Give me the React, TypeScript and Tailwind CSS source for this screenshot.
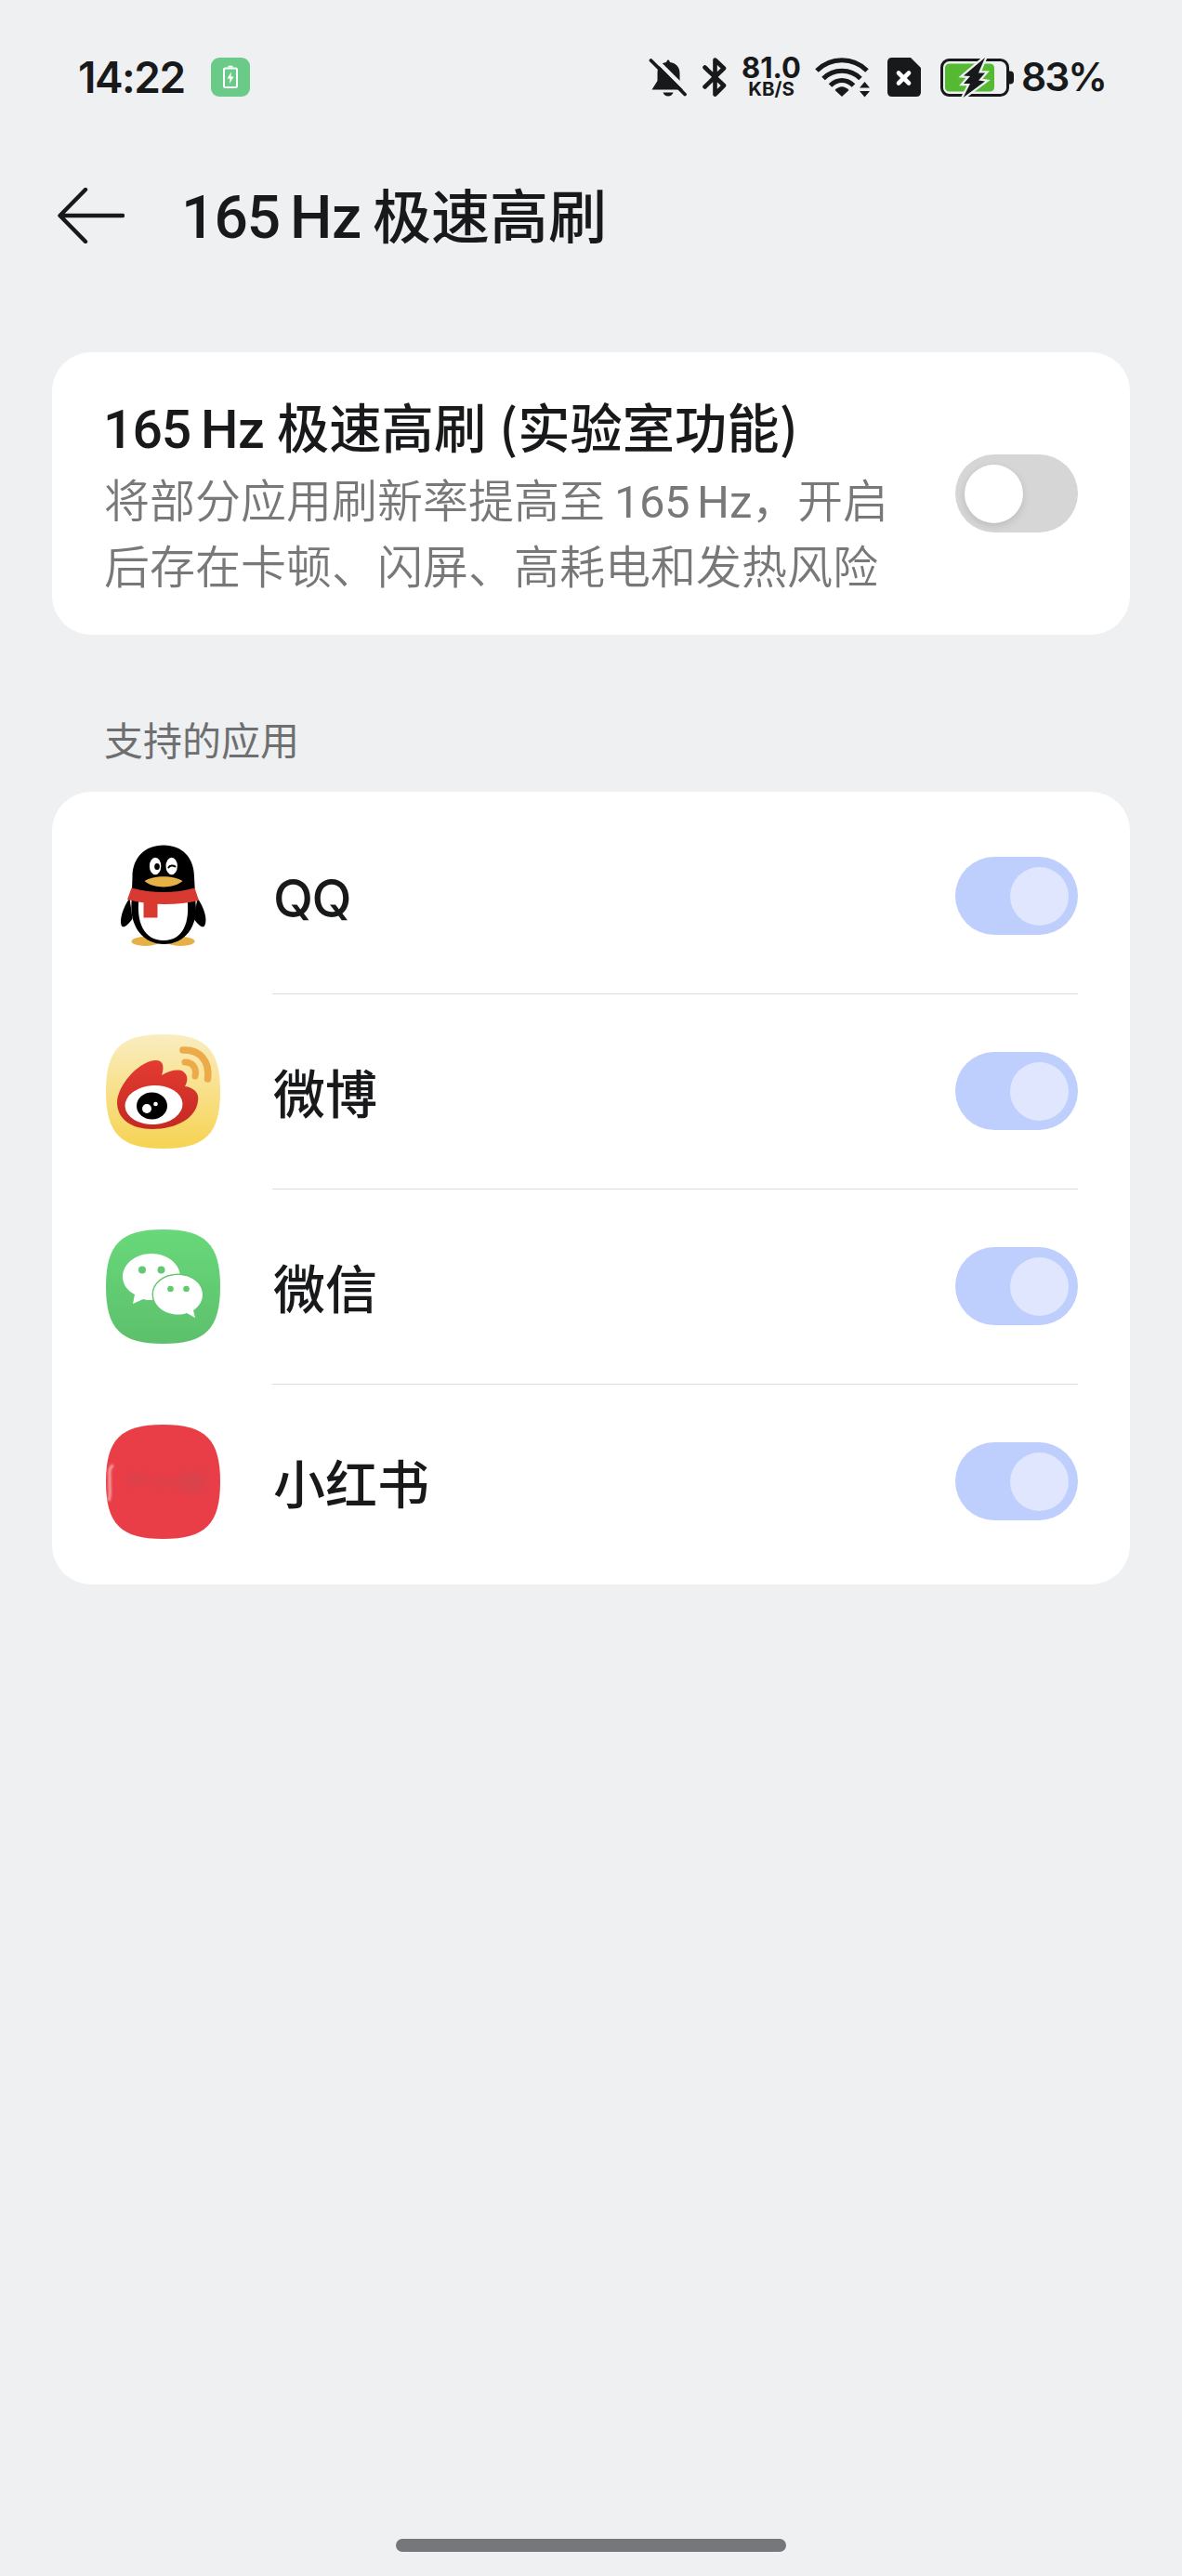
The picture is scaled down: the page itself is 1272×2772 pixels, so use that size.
import type { ReactNode } from 'react';
import clsx from 'clsx';

interface AppItem {
  name: string;
  latin?: boolean;
  icon: ReactNode;
}

// 系统图标的圆角矩形（超椭圆）
const SQUIRCLE =
  'M61.5 0C107 0 123 16 123 61.5C123 107 107 123 61.5 123C16 123 0 107 0 61.5C0 16 16 0 61.5 0Z';

function QQIcon() {
  return (
    <svg width="123" height="123" viewBox="0 0 123 123">
      <g transform="translate(0.5 6.5)">
        <ellipse cx="42" cy="103.500" rx="15" ry="5" fill="#e5b045" />
        <ellipse cx="80" cy="103.500" rx="15" ry="5" fill="#e5b045" />
        <path d="M25 57C18 67 14 79 16 86C18 91 24 85 28 79Z" fill="#000" />
        <path d="M98 57C105 67 109 79 106 86C104 91 98 85 94 79Z" fill="#000" />
        <path d="M61.500 0C82 0 94.500 14 94.500 34L96 62C99 88 84 106.500 62 106.500C40 106.500 25 88 27 62L28 34C28 14 41 0 61.500 0Z" fill="#000" />
        <path d="M35 58H87C90 82 83 102.500 61.500 102.500C40 102.500 32 82 35 58Z" fill="#fff" />
        <path d="M27 46C50 52 73 52 95 46L99.500 59.500C76 65 48 65 22.500 58.500Z" fill="#d83a31" />
        <path d="M40 60H55V78H40Z" fill="#d83a31" />
        <ellipse cx="52.600" cy="22.500" rx="6.200" ry="9.300" fill="#fff" />
        <ellipse cx="70.200" cy="22.500" rx="6.200" ry="9.300" fill="#fff" />
        <ellipse cx="54.500" cy="23" rx="2.800" ry="3.600" fill="#000" />
        <path d="M67 24C68 21.500 72 21.500 74 23" stroke="#000" strokeWidth="2" fill="none" strokeLinecap="round" />
        <path d="M41 38.500C50 32 73 32 82 38.500C73 47 50 47 41 38.500Z" fill="#e5b045" />
      </g>
    </svg>
  );
}

function WeiboIcon() {
  return (
    <svg width="123" height="123" viewBox="0 0 123 123">
      <defs>
        <linearGradient id="wb-bg" x1="0" y1="0" x2="0" y2="1">
          <stop offset="0" stopColor="#faedc0" />
          <stop offset="1" stopColor="#f6d352" />
        </linearGradient>
        <linearGradient id="wb-red" x1="0" y1="0" x2="0" y2="1">
          <stop offset="0" stopColor="#e43b32" />
          <stop offset="1" stopColor="#c32a22" />
        </linearGradient>
      </defs>
      <path d={SQUIRCLE} fill="url(#wb-bg)" />
      <path
        d="M52 28C62 27 63 35 60 44C68 39 78 37 83 40C89 44 88 51 85 56C94 57 101 63 99 72C97 90 76 102 50 102C27 102 12 91 12 73C13 55 33 31 52 28Z"
        fill="url(#wb-red)"
      />
      <ellipse cx="51.500" cy="76" rx="31" ry="21" transform="rotate(-3 51.500 76)" fill="#fff" />
      <ellipse cx="49.500" cy="77" rx="16.500" ry="14.500" fill="#000" />
      <circle cx="44" cy="80" r="5" fill="#fff" />
      <circle cx="53.500" cy="75" r="2.300" fill="#fff" />
      <path d="M83 17C101 16 112 29 109.500 48" stroke="#edaa48" strokeWidth="7.500" fill="none" strokeLinecap="round" />
      <path d="M85 30C93 30 98 36 96 45" stroke="#edaa48" strokeWidth="7" fill="none" strokeLinecap="round" />
    </svg>
  );
}

function WechatIcon() {
  return (
    <svg width="123" height="123" viewBox="0 0 123 123">
      <defs>
        <linearGradient id="wx-bg" x1="0" y1="0" x2="0" y2="1">
          <stop offset="0" stopColor="#68d87a" />
          <stop offset="1" stopColor="#5dc06c" />
        </linearGradient>
      </defs>
      <path d={SQUIRCLE} fill="url(#wx-bg)" />
      <path
        d="M49 26C66 26 80 37 80 51C80 66 66 76 49 76C46 76 43 76 40 75L29 80L31 70C23 66 18 59 18 51C18 37 32 26 49 26Z"
        fill="#fff"
      />
      <path
        d="M77.500 49C92 49 104 58 104 70C104 77 100 83 94 87L96 95L87 90C84 91 81 91.500 77.500 91.500C63 91.500 51 82 51 70C51 58 63 49 77.500 49Z"
        fill="#fff"
        stroke="#61c972"
        strokeWidth="3"
        paintOrder="stroke"
      />
      <circle cx="39" cy="43.500" r="4" fill="#61c972" />
      <circle cx="59.500" cy="43.500" r="4" fill="#61c972" />
      <circle cx="69.500" cy="64" r="3.300" fill="#61c972" />
      <circle cx="86.500" cy="64" r="3.300" fill="#61c972" />
    </svg>
  );
}

function RedNoteIcon() {
  return (
    <svg width="123" height="123" viewBox="0 0 123 123">
      <defs>
        <filter id="xhs-soft" x="-50%" y="-50%" width="200%" height="200%">
          <feGaussianBlur stdDeviation="4" />
        </filter>
        <filter id="xhs-edge" x="-100%" y="-20%" width="300%" height="140%">
          <feGaussianBlur stdDeviation="1" />
        </filter>
        <clipPath id="xhs-clip">
          <path d={SQUIRCLE} />
        </clipPath>
      </defs>
      <g clipPath="url(#xhs-clip)">
        <rect width="123" height="123" fill="#e93e48" />
        <g filter="url(#xhs-soft)" fill="#c94850" opacity=".5">
          <rect x="24" y="54" width="20" height="10" />
          <rect x="52" y="58" width="24" height="8" />
          <rect x="80" y="52" width="26" height="20" />
        </g>
        <path d="M8 44Q3 45 4 56V66Q5 75 3 82" stroke="#f6a3a7" strokeWidth="3" fill="none" filter="url(#xhs-edge)" />
      </g>
    </svg>
  );
}

const APPS: AppItem[] = [
  { name: 'QQ', latin: true, icon: <QQIcon /> },
  { name: '微博', icon: <WeiboIcon /> },
  { name: '微信', icon: <WechatIcon /> },
  { name: '小红书', icon: <RedNoteIcon /> },
];

function Toggle({ on }: { on: boolean }) {
  return (
    <div
      className={clsx(
        'flex h-[84px] w-[132px] shrink-0 items-center rounded-full px-[10px]',
        on ? 'justify-end bg-[#becffd]' : 'justify-start bg-[#d6d6d6]'
      )}
    >
      <div
        className={clsx(
          'size-[63px] rounded-full',
          on ? 'bg-[#e0e6fe]' : 'bg-white shadow-[0_3px_8px_rgba(0,0,0,0.12)]'
        )}
      />
    </div>
  );
}

function StatusBar() {
  return (
    <div className="flex h-[166px] items-center justify-between pr-[84px] pl-[84px] font-['Inter',sans-serif]">
      <div className="flex items-center">
        <span className="w-[143px] text-[46px] leading-none font-semibold tracking-[-1.500px] whitespace-nowrap">14:22</span>
        <svg width="42" height="42" viewBox="0 0 42 42">
          <rect width="42" height="42" rx="9" fill="#6acb88" />
          <rect x="14" y="11.500" width="14" height="20.500" rx="1.500" stroke="#fff" strokeWidth="2" fill="none" />
          <path d="M18 10.500Q18 8.500 21 8.500Q24 8.500 24 10.500Z" fill="#fff" />
          <path d="M22 15.500L17.500 22.500H20.500L20 28L24.500 20.500H21.500Z" fill="#fff" />
        </svg>
      </div>

      <div className="flex items-center">
        {/* 静音 */}
        <svg width="42" height="42" viewBox="0 0 42 42">
          <path d="M21 2.500C22.500 2.500 22.500 4.500 23 5C29.500 6 33.500 10 33.500 17V25L38 34.500H3.500L9.500 25V17C9.500 10 12.500 6 19 5C19.500 4.500 19.500 2.500 21 2.500Z" fill="#18191a" />
          <path d="M15.500 37.500H26.500Q25 41.500 21 41.500Q17 41.500 15.500 37.500Z" fill="#18191a" />
          <path d="M6 0.500L43 37.500" stroke="#eff0f2" strokeWidth="4.500" />
          <path d="M2.500 3L39 39.500" stroke="#18191a" strokeWidth="3.800" strokeLinecap="round" />
        </svg>
        {/* 蓝牙 */}
        <svg className="ml-[15px]" width="28" height="44" viewBox="0 0 28 44">
          <path d="M3.500 11.500L24 31L14.500 40.500V3.500L24 12.500L3.500 32.500" stroke="#18191a" strokeWidth="4.600" fill="none" strokeLinejoin="round" strokeLinecap="round" />
        </svg>
        <div className="ml-[15px] flex w-[64px] flex-col items-center">
          <span className="h-[26px] text-[31px] leading-[24px] font-bold">81.0</span>
          <span className="text-[20.500px] leading-[18px] font-bold">KB/S</span>
        </div>
        {/* Wi-Fi */}
        <svg className="ml-[15px]" width="60" height="44" viewBox="0 0 60 44">
          <g stroke="#18191a" strokeWidth="5" fill="none">
            <path d="M2 15C17 0 41 0 56 15" />
            <path d="M9 23.500C20 12.500 38 12.500 49 23.500" />
            <path d="M16.500 31C24 23.500 34 23.500 41.500 31" />
          </g>
          <path d="M29 43L21.500 36Q29 28.500 36.500 36Z" fill="#18191a" />
          <path d="M48 33.500L53.500 27L59 33.500ZM48 37L53.500 43.500L59 37Z" fill="#18191a" />
        </svg>
        {/* 无 SIM 卡 */}
        <svg className="ml-[18px]" width="36" height="42" viewBox="0 0 36 42">
          <path d="M5 0H25L36 11V37Q36 42 31 42H5Q0 42 0 37V5Q0 0 5 0Z" fill="#18191a" />
          <path d="M12 16.500L23 27.500M23 16.500L12 27.500" stroke="#fff" strokeWidth="4.600" strokeLinecap="round" />
        </svg>
        {/* 电池 */}
        <svg className="ml-[21px]" width="79" height="46" viewBox="0 0 79 46">
          <rect x="1.500" y="4.500" width="71" height="38" rx="8" stroke="#18191a" strokeWidth="3" fill="none" />
          <path d="M74 16.500H75Q79 16.500 79 20.500V26.500Q79 30.500 75 30.500H74Z" fill="#18191a" />
          <path d="M10 8.500H53Q58 8.500 58 13.500V33.500Q58 38.500 53 38.500H10Q5 38.500 5 33.500V13.500Q5 8.500 10 8.500Z" fill="#56b932" />
          <path
            d="M48 2L25 21.500L32 22L25 30L32 30L24.500 45L48 27.500L41 26.500L48 18.500L41 18.500Z"
            fill="#18191a"
            stroke="#eff0f2"
            strokeWidth="4.500"
            paintOrder="stroke"
          />
        </svg>
        <span className="ml-[8px] w-[89px] pt-px text-[42.500px] leading-none font-semibold tracking-[-2px] whitespace-nowrap">83%</span>
      </div>
    </div>
  );
}

function Header() {
  return (
    <div className="flex h-[132px] items-center pl-[62px]">
      <svg width="72" height="60" viewBox="0 0 72 60">
        <path d="M30 2L2.500 30L30 58M3 30H70" stroke="#18191a" strokeWidth="4.400" fill="none" strokeLinecap="round" strokeLinejoin="round" />
      </svg>
      <h1 className="ml-[61px] flex items-baseline text-[63px] leading-none font-medium whitespace-nowrap">
        <span className="w-[117px] font-['Roboto'] text-[64px] tracking-[-1px]">165</span>
        <span className="w-[89px] font-['Roboto'] text-[64px] tracking-[-0.500px]">Hz</span>
        <span>极速高刷</span>
      </h1>
    </div>
  );
}

function FeatureCard() {
  return (
    <section className="mx-[56px] mt-[81px] flex h-[304px] items-center justify-between rounded-[42px] bg-white px-[56px]">
      <div className="whitespace-nowrap">
        <h2 className="-ml-px flex h-[80px] items-baseline text-[56.300px] leading-[76px] font-medium">
          <span className="w-[105px] font-['Roboto'] text-[57px] tracking-[-1px]">165</span>
          <span className="w-[82px] font-['Roboto'] text-[57px] tracking-[-0.500px]">Hz</span>
          <span>极速高刷</span>
          <span className="w-[34px] text-right">(</span>
          <span>实验室功能</span>
          <span>)</span>
        </h2>
        <div className="text-[49px] leading-[71px] font-[350] text-[#787878]">
          <p className="flex h-[71px] items-baseline">
            <span>将部分应用刷新率提高至</span>
            <span className="ml-[10px] w-[89px] font-['Roboto'] font-normal tracking-[-0.500px]">165</span>
            <span className="w-[59px] font-['Roboto'] font-normal">Hz</span>
            <span>，开启</span>
          </p>
          <p>后存在卡顿、闪屏、高耗电和发热风险</p>
        </div>
      </div>
      <Toggle on={false} />
    </section>
  );
}

function AppRow({ app, last }: { app: AppItem; last: boolean }) {
  return (
    <li className="flex h-[210px] items-center">
      <div className="mb-[2px] ml-[1.500px] size-[123px] shrink-0">{app.icon}</div>
      <div
        className={clsx(
          'ml-[56.500px] flex h-full flex-1 items-center justify-between border-b pb-px',
          last ? 'border-transparent' : 'border-[#dcdcdc]'
        )}
      >
        <span
          className={clsx(
            'pl-px text-[56px] leading-none font-medium',
            app.latin ? "pt-[5px] font-['Inter'] tracking-[-1.500px]" : 'pb-px'
          )}
        >
          {app.name}
        </span>
        <Toggle on />
      </div>
    </li>
  );
}

export default function App() {
  return (
    <div className="flex h-[2772px] w-[1272px] flex-col bg-[#eff0f2] font-['Noto_Sans_CJK_SC',sans-serif] text-[#18191a]">
      <StatusBar />
      <Header />
      <FeatureCard />
      <h3 className="mt-[82px] mb-[27px] pl-[112px] text-[42px] leading-[60px] text-[#6e6f70]">支持的应用</h3>
      <ul className="mx-[56px] h-[853px] rounded-[42px] bg-white px-[56px] pt-[8px]">
        {APPS.map((app, i) => (
          <AppRow key={app.name} app={app} last={i === APPS.length - 1} />
        ))}
      </ul>
      <div className="mt-auto mb-[26px] h-[14px] w-[420px] self-center rounded-full bg-[#76777a]" />
    </div>
  );
}
